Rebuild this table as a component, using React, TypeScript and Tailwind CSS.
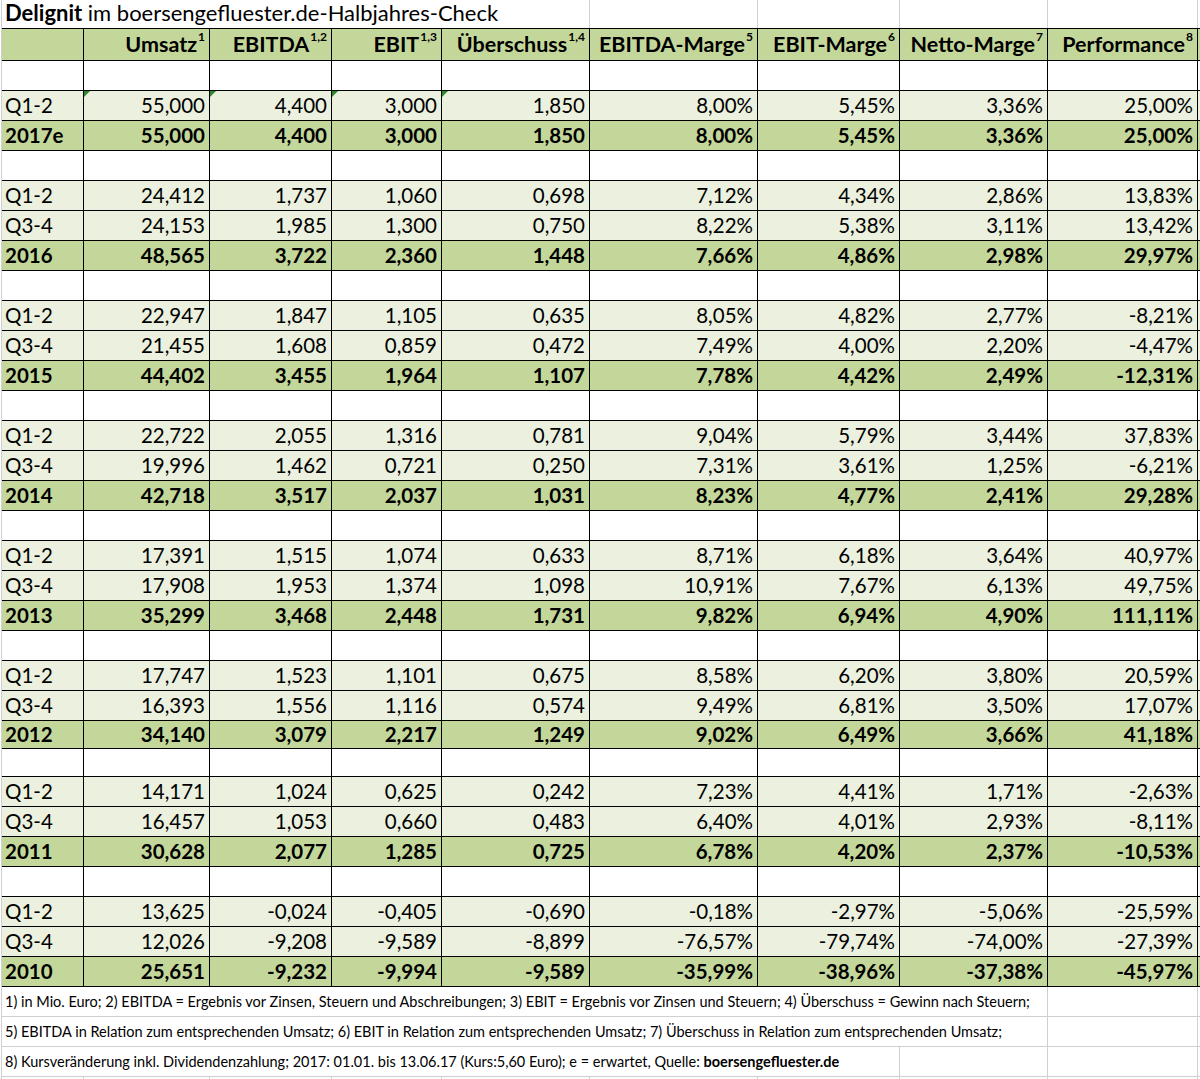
import React from "react";

const G =
  "grid grid-cols-[82px_126px_122px_110px_148px_168px_142px_148px_150px]";

type Row = { label: string; v: string[]; kind: "q" | "y" };
type Group = { rows: Row[]; tri?: boolean; shortYear?: boolean; shortBlank?: boolean };

const groups: Group[] = [
  {
    tri: true,
    rows: [
      { label: "Q1-2", kind: "q", v: ["55,000", "4,400", "3,000", "1,850", "8,00%", "5,45%", "3,36%", "25,00%"] },
      { label: "2017e", kind: "y", v: ["55,000", "4,400", "3,000", "1,850", "8,00%", "5,45%", "3,36%", "25,00%"] },
    ],
  },
  {
    rows: [
      { label: "Q1-2", kind: "q", v: ["24,412", "1,737", "1,060", "0,698", "7,12%", "4,34%", "2,86%", "13,83%"] },
      { label: "Q3-4", kind: "q", v: ["24,153", "1,985", "1,300", "0,750", "8,22%", "5,38%", "3,11%", "13,42%"] },
      { label: "2016", kind: "y", v: ["48,565", "3,722", "2,360", "1,448", "7,66%", "4,86%", "2,98%", "29,97%"] },
    ],
  },
  {
    rows: [
      { label: "Q1-2", kind: "q", v: ["22,947", "1,847", "1,105", "0,635", "8,05%", "4,82%", "2,77%", "-8,21%"] },
      { label: "Q3-4", kind: "q", v: ["21,455", "1,608", "0,859", "0,472", "7,49%", "4,00%", "2,20%", "-4,47%"] },
      { label: "2015", kind: "y", v: ["44,402", "3,455", "1,964", "1,107", "7,78%", "4,42%", "2,49%", "-12,31%"] },
    ],
  },
  {
    rows: [
      { label: "Q1-2", kind: "q", v: ["22,722", "2,055", "1,316", "0,781", "9,04%", "5,79%", "3,44%", "37,83%"] },
      { label: "Q3-4", kind: "q", v: ["19,996", "1,462", "0,721", "0,250", "7,31%", "3,61%", "1,25%", "-6,21%"] },
      { label: "2014", kind: "y", v: ["42,718", "3,517", "2,037", "1,031", "8,23%", "4,77%", "2,41%", "29,28%"] },
    ],
  },
  {
    rows: [
      { label: "Q1-2", kind: "q", v: ["17,391", "1,515", "1,074", "0,633", "8,71%", "6,18%", "3,64%", "40,97%"] },
      { label: "Q3-4", kind: "q", v: ["17,908", "1,953", "1,374", "1,098", "10,91%", "7,67%", "6,13%", "49,75%"] },
      { label: "2013", kind: "y", v: ["35,299", "3,468", "2,448", "1,731", "9,82%", "6,94%", "4,90%", "111,11%"] },
    ],
  },
  {
    shortYear: true,
    rows: [
      { label: "Q1-2", kind: "q", v: ["17,747", "1,523", "1,101", "0,675", "8,58%", "6,20%", "3,80%", "20,59%"] },
      { label: "Q3-4", kind: "q", v: ["16,393", "1,556", "1,116", "0,574", "9,49%", "6,81%", "3,50%", "17,07%"] },
      { label: "2012", kind: "y", v: ["34,140", "3,079", "2,217", "1,249", "9,02%", "6,49%", "3,66%", "41,18%"] },
    ],
  },
  {
    shortBlank: true,
    rows: [
      { label: "Q1-2", kind: "q", v: ["14,171", "1,024", "0,625", "0,242", "7,23%", "4,41%", "1,71%", "-2,63%"] },
      { label: "Q3-4", kind: "q", v: ["16,457", "1,053", "0,660", "0,483", "6,40%", "4,01%", "2,93%", "-8,11%"] },
      { label: "2011", kind: "y", v: ["30,628", "2,077", "1,285", "0,725", "6,78%", "4,20%", "2,37%", "-10,53%"] },
    ],
  },
  {
    rows: [
      { label: "Q1-2", kind: "q", v: ["13,625", "-0,024", "-0,405", "-0,690", "-0,18%", "-2,97%", "-5,06%", "-25,59%"] },
      { label: "Q3-4", kind: "q", v: ["12,026", "-9,208", "-9,589", "-8,899", "-76,57%", "-79,74%", "-74,00%", "-27,39%"] },
      { label: "2010", kind: "y", v: ["25,651", "-9,232", "-9,994", "-9,589", "-35,99%", "-38,96%", "-37,38%", "-45,97%"] },
    ],
  },
];

const headers: [string, string][] = [
  ["Umsatz", "1"],
  ["EBITDA", "1,2"],
  ["EBIT", "1,3"],
  ["Überschuss", "1,4"],
  ["EBITDA-Marge", "5"],
  ["EBIT-Marge", "6"],
  ["Netto-Marge", "7"],
  ["Performance", "8"],
];

function Tri() {
  return (
    <span className="absolute left-0 top-0 h-0 w-0 border-t-[6px] border-r-[6px] border-t-[#2a8a2a] border-r-transparent" />
  );
}

function BlankRow({ short }: { short?: boolean }) {
  return (
    <div className={`${G} border-b border-black bg-white ${short ? "h-[28px]" : "h-[30px]"}`}>
      {Array.from({ length: 9 }).map((_, i) => (
        <div key={i} className="border-r border-black" />
      ))}
    </div>
  );
}

function DataRow({ row, tri, short }: { row: Row; tri?: boolean; short?: boolean }) {
  const bg = row.kind === "q" ? "bg-[#ebf1de]" : "bg-[#c4d79b] font-bold";
  const lh = short ? "leading-[26px]" : "leading-[28px]";
  return (
    <div className={`${G} border-b border-black ${bg} ${short ? "h-[28px]" : "h-[30px]"}`}>
      <div className={`border-r border-black pl-[3px] whitespace-nowrap ${lh}`}>{row.label}</div>
      {row.v.map((val, i) => (
        <div key={i} className={`relative border-r border-black pr-[4px] text-right whitespace-nowrap ${lh}`}>
          {tri && i < 4 ? <Tri /> : null}
          {val}
        </div>
      ))}
    </div>
  );
}

export default function App() {
  return (
    <div className="w-[1200px] bg-white pl-px font-[Lato,sans-serif] text-[20.5px] text-black">
      <div className="border-l border-[#d0d0d0]">
        {/* Title row */}
        <div className={`${G} h-[28px]`}>
          <div className="col-span-5 border-r border-[#d0d0d0] pl-[3px] text-[22px] leading-[25px] whitespace-nowrap">
            <span className="font-bold">Delignit</span> im boersengefluester.de-Halbjahres-Check
          </div>
          <div className="border-r border-[#d0d0d0]" />
          <div className="border-r border-[#d0d0d0]" />
          <div className="border-r border-[#d0d0d0]" />
          <div className="border-r border-[#d0d0d0]" />
        </div>

        {/* Table */}
        <div className="border-t border-black">
          <div className={`${G} h-[32px] border-b border-black bg-[#c4d79b] font-bold text-[21.5px]`}>
            <div className="border-r border-black" />
            {headers.map(([h, s]) => (
              <div key={h} className="border-r border-black pr-[4px] text-right leading-[31px] whitespace-nowrap">
                {h}
                <span className="relative -top-[11px] ml-px text-[12px]">{s}</span>
              </div>
            ))}
          </div>

          {groups.map((g, gi) => (
            <React.Fragment key={gi}>
              <BlankRow short={g.shortBlank} />
              {g.rows.map((r, ri) => (
                <DataRow
                  key={ri}
                  row={r}
                  tri={g.tri && ri === 0}
                  short={g.shortYear && r.kind === "y"}
                />
              ))}
            </React.Fragment>
          ))}
        </div>

        {/* Footnotes */}
        <div className="text-[14.5px]">
          <div className={`${G} h-[30px] border-b border-[#d0d0d0]`}>
            <div className="col-span-8 border-r border-[#d0d0d0] pl-[3px] leading-[29px] whitespace-nowrap">
              1) in Mio. Euro; 2) EBITDA = Ergebnis vor Zinsen, Steuern und Abschreibungen; 3) EBIT = Ergebnis vor Zinsen und Steuern; 4) Überschuss = Gewinn nach Steuern;
            </div>
            <div className="border-r border-[#d0d0d0]" />
          </div>
          <div className={`${G} h-[30px] border-b border-[#d0d0d0]`}>
            <div className="col-span-8 border-r border-[#d0d0d0] pl-[3px] leading-[29px] whitespace-nowrap">
              5) EBITDA in Relation zum entsprechenden Umsatz; 6) EBIT in Relation zum entsprechenden Umsatz; 7) Überschuss in Relation zum entsprechenden Umsatz;
            </div>
            <div className="border-r border-[#d0d0d0]" />
          </div>
          <div className={`${G} h-[30px] border-b border-[#d0d0d0]`}>
            <div className="col-span-7 border-r border-[#d0d0d0] pl-[3px] leading-[29px] whitespace-nowrap">
              8) Kursveränderung inkl. Dividendenzahlung; 2017: 01.01. bis 13.06.17 (Kurs:5,60 Euro); e = erwartet, Quelle:{" "}
              <span className="font-bold">boersengefluester.de</span>
            </div>
            <div className="border-r border-[#d0d0d0]" />
            <div className="border-r border-[#d0d0d0]" />
          </div>
          <div className={`${G} h-[10px]`}>
            {Array.from({ length: 9 }).map((_, i) => (
              <div key={i} className="border-r border-[#d0d0d0]" />
            ))}
          </div>
        </div>
      </div>
    </div>
  );
}
